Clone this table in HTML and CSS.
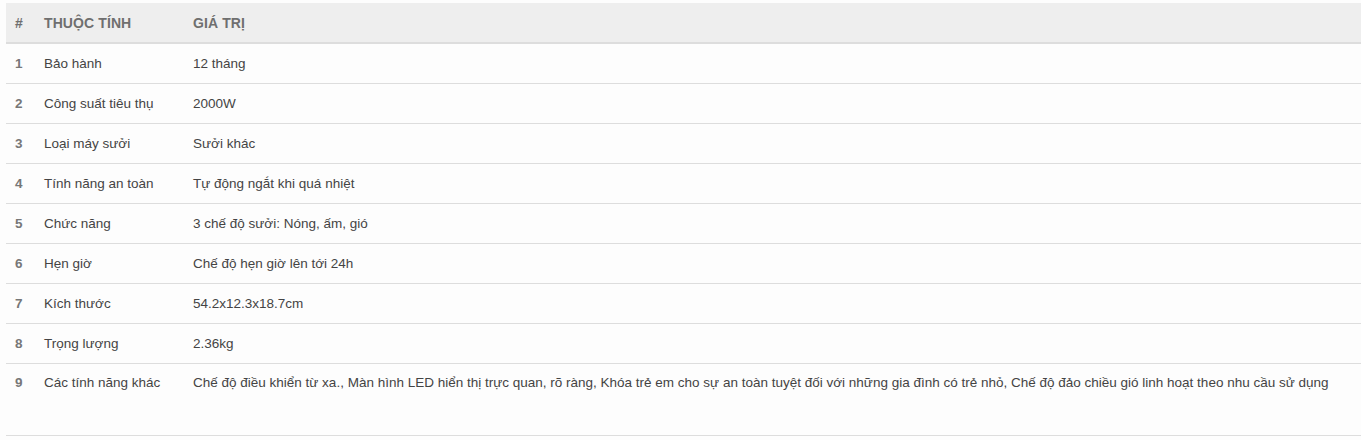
FILE: index.html
```html
<!DOCTYPE html>
<html lang="vi">
<head>
<meta charset="utf-8">
<link rel="stylesheet" href="styles.css">
</head>
<body>
<table class="spec">
  <colgroup>
    <col class="c-num">
    <col class="c-attr">
    <col class="c-val">
  </colgroup>
  <thead>
    <tr><th>#</th><th>THUỘC TÍNH</th><th>GIÁ TRỊ</th></tr>
  </thead>
  <tbody>
    <tr><td class="num">1</td><td>Bảo hành</td><td>12 tháng</td></tr>
    <tr><td class="num">2</td><td>Công suất tiêu thụ</td><td>2000W</td></tr>
    <tr><td class="num">3</td><td>Loại máy sưởi</td><td>Sưởi khác</td></tr>
    <tr><td class="num">4</td><td>Tính năng an toàn</td><td>Tự động ngắt khi quá nhiệt</td></tr>
    <tr><td class="num">5</td><td>Chức năng</td><td>3 chế độ sưởi: Nóng, ấm, gió</td></tr>
    <tr><td class="num">6</td><td>Hẹn giờ</td><td>Chế độ hẹn giờ lên tới 24h</td></tr>
    <tr><td class="num">7</td><td>Kích thước</td><td>54.2x12.3x18.7cm</td></tr>
    <tr><td class="num">8</td><td>Trọng lượng</td><td>2.36kg</td></tr>
    <tr class="tall"><td class="num">9</td><td>Các tính năng khác</td><td>Chế độ điều khiển từ xa., Màn hình LED hiển thị trực quan, rõ ràng, Khóa trẻ em cho sự an toàn tuyệt đối với những gia đình có trẻ nhỏ, Chế độ đảo chiều gió linh hoạt theo nhu cầu sử dụng</td></tr>
  </tbody>
</table>
</body>
</html>
```
FILE: styles.css
```css
html, body {
  margin: 0;
  background: #fdfdfd;
}
body {
  padding: 3px 0 0 6px;
  font-family: "Liberation Sans", Arial, sans-serif;
  font-size: 13.5px;
  color: #444;
}
.spec {
  width: 1355px;
  border-collapse: collapse;
  table-layout: fixed;
}
.c-num { width: 30px; }
.c-attr { width: 149px; }
.c-val { width: auto; }
.spec th {
  background: #eee;
  color: #6f6f6f;
  font-size: 14px;
  font-weight: bold;
  letter-spacing: 0.1px;
  text-align: left;
  height: 39px;
  padding: 0 8px;
  line-height: 16px;
  border-bottom: 2px solid #ddd;
  vertical-align: middle;
}
.spec th:first-child,
.spec td:first-child {
  padding-left: 9px;
  padding-right: 0;
}
.spec td {
  height: 39px;
  padding: 0 8px;
  line-height: 15px;
  border-bottom: 1px solid #ddd;
  vertical-align: middle;
  white-space: nowrap;
}
.spec td.num {
  font-weight: bold;
  color: #777;
}
.spec tr.tall td {
  height: 60px;
  vertical-align: top;
  padding-top: 11px;
}
```
